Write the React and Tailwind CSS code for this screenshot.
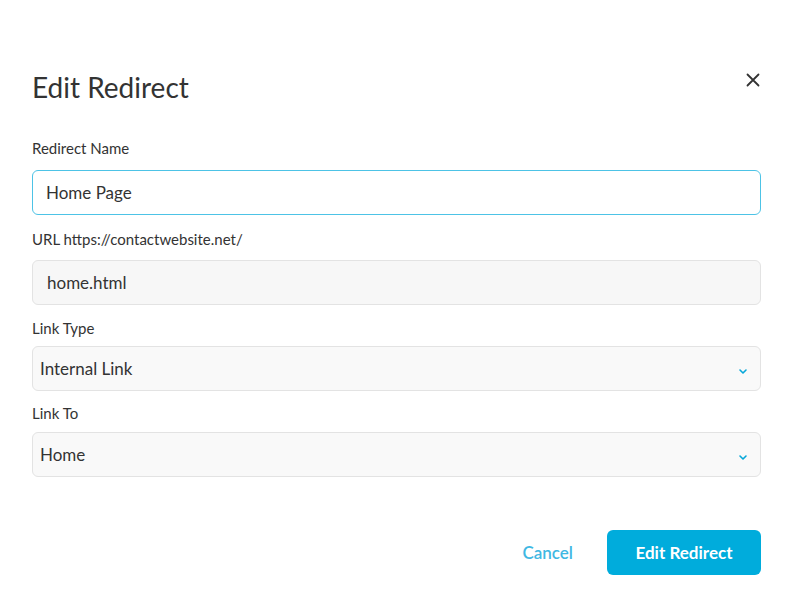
export default function App() {
  const f = { fontFamily: "Lato, 'Liberation Sans', sans-serif" };
  const Chevron = () => (
    <svg width="10" height="7" viewBox="0 0 10 7" className="absolute right-[12px] top-[21px]"><path d="M2 2l3 3 3-3" fill="none" stroke="#06a7d9" strokeWidth="1.6" strokeLinecap="round" strokeLinejoin="round"/></svg>
  );
  return (
    <div style={f} className="w-[793px] h-[608px] bg-white text-[#333] relative">
      <div className="px-[32px] pt-[70px]">
        <div className="flex justify-between items-center h-[34px]">
          <h1 className="text-[28px] leading-[34px] text-[#333]">Edit Redirect</h1>
          <svg width="14" height="14" viewBox="0 0 14 14" className="mr-[1px] -mt-[14px]"><path d="M1.5 1.5l11 11M12.5 1.5l-11 11" stroke="#333" strokeWidth="1.8" strokeLinecap="round"/></svg>
        </div>
      </div>
      <div className="absolute left-[32px] right-[32px] top-[138px] flex flex-col">
        <label className="text-[15px] leading-[20px]">Redirect Name</label>
        <div className="mt-[12px] h-[45px] rounded-[6px] border-[1.5px] border-[#4dc3e6] bg-white flex items-center px-[13px] text-[17px]">Home Page</div>
        <label className="mt-[14px] text-[15px] leading-[20px]">URL https://contactwebsite.net/</label>
        <div className="mt-[11px] h-[45px] rounded-[6px] border border-[#e3e3e3] bg-[#f7f7f7] flex items-center px-[14px] text-[17px]">home.html</div>
        <label className="mt-[13px] text-[15px] leading-[20px]">Link Type</label>
        <div className="mt-[8px] relative h-[45px] rounded-[6px] border border-[#e3e3e3] bg-[#f9f9f9] flex items-center px-[7px] text-[17px]">Internal Link<Chevron/></div>
        <label className="mt-[12px] text-[15px] leading-[20px]">Link To</label>
        <div className="mt-[9px] relative h-[45px] rounded-[6px] border border-[#e3e3e3] bg-[#f9f9f9] flex items-center px-[7px] text-[17px]">Home<Chevron/></div>
        <div className="mt-[53px] flex justify-end items-center">
          <span className="text-[#3fb8e3] text-[17px] font-semibold mr-[34px]">Cancel</span>
          <div className="w-[154px] h-[45px] rounded-[6px] bg-[#00acdc] text-white text-[17px] font-bold flex items-center justify-center">Edit Redirect</div>
        </div>
      </div>
    </div>
  );
}
